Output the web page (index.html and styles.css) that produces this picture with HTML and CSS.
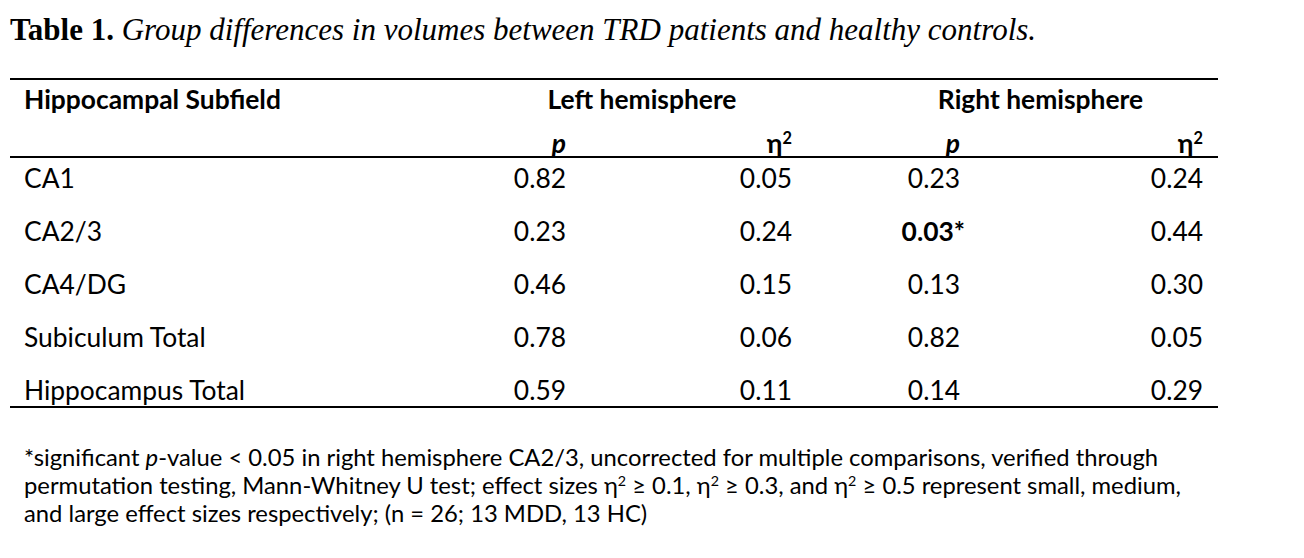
FILE: index.html
```html
<!DOCTYPE html>
<html lang="en">
<head>
<meta charset="utf-8">
<title>Table 1</title>
<link rel="stylesheet" href="styles.css">
</head>
<body>
<div class="page">
  <h1 class="title"><b>Table 1.</b> <i>Group differences in volumes between TRD patients and healthy controls.</i></h1>

  <div class="table">
    <div class="head">
      <div class="cell label bold">Hippocampal Subfield</div>
      <div class="cell span2 bold">Left hemisphere</div>
      <div class="cell span2 right-group bold">Right hemisphere</div>

      <div class="cell label sub"></div>
      <div class="cell num sub bold"><i>p</i></div>
      <div class="cell num sub bold">η<sup>2</sup></div>
      <div class="cell num sub bold"><i>p</i></div>
      <div class="cell num sub bold">η<sup>2</sup></div>
    </div>

    <div class="body">
      <div class="cell label">CA1</div>
      <div class="cell num">0.82</div>
      <div class="cell num">0.05</div>
      <div class="cell num">0.23</div>
      <div class="cell num">0.24</div>

      <div class="cell label">CA2/3</div>
      <div class="cell num">0.23</div>
      <div class="cell num">0.24</div>
      <div class="cell num bold sig">0.03*</div>
      <div class="cell num">0.44</div>

      <div class="cell label">CA4/DG</div>
      <div class="cell num">0.46</div>
      <div class="cell num">0.15</div>
      <div class="cell num">0.13</div>
      <div class="cell num">0.30</div>

      <div class="cell label">Subiculum Total</div>
      <div class="cell num">0.78</div>
      <div class="cell num">0.06</div>
      <div class="cell num">0.82</div>
      <div class="cell num">0.05</div>

      <div class="cell label">Hippocampus Total</div>
      <div class="cell num">0.59</div>
      <div class="cell num">0.11</div>
      <div class="cell num">0.14</div>
      <div class="cell num">0.29</div>
    </div>
  </div>

  <p class="note">*significant <i>p</i>-value &lt; 0.05 in right hemisphere CA2/3, uncorrected for multiple comparisons, verified through<br>permutation testing, Mann-Whitney U test; effect sizes η<sup>2</sup> ≥ 0.1, η<sup>2</sup> ≥ 0.3, and η<sup>2</sup> ≥ 0.5 represent small, medium,<br>and large effect sizes respectively; (n = 26; 13 MDD, 13 HC)</p>
</div>
</body>
</html>
```

FILE: styles.css
```css
html, body {
  margin: 0;
  padding: 0;
  background: #ffffff;
  color: #000000;
}

.page {
  padding: 12px 0 0 10px;
}

.title {
  margin: 0;
  font-family: "Liberation Serif", "Times New Roman", serif;
  font-size: 31px;
  line-height: 36px;
  font-weight: normal;
  white-space: nowrap;
}

.title b {
  font-weight: bold;
}

.table {
  margin-top: 30px;
  width: 1208px;
  font-family: Lato, "Liberation Sans", sans-serif;
  font-size: 26.4px;
  color: #000;
}

.head,
.body {
  display: grid;
  grid-template-columns: 467px 104px 226px 168px 243px;
}

.head {
  border-top: 2px solid #000;
  border-bottom: 2px solid #000;
  padding-top: 4px;
  row-gap: 16px;
  grid-template-rows: 30px 26px;
}

.body {
  border-bottom: 2px solid #000;
  padding-top: 5px;
  padding-bottom: 1px;
  row-gap: 23px;
  grid-auto-rows: 30px;
}

.cell {
  line-height: 30px;
  white-space: nowrap;
}

.head .sub {
  line-height: 26px;
}

.label {
  padding-left: 14px;
}

.num {
  text-align: right;
  padding-right: 15px;
}

.span2 {
  grid-column: span 2;
  text-align: center;
}

.right-group {
  padding-left: 56px;
}

.bold {
  font-weight: bold;
}

.sig {
  margin-right: -5px;
}

sup {
  font-size: 0.62em;
  line-height: 0;
  vertical-align: 0.55em;
}

.note {
  margin: 35px 0 0 14px;
  font-family: Lato, "Liberation Sans", sans-serif;
  font-size: 23.8px;
  line-height: 28px;
  white-space: nowrap;
}

.note sup {
  font-size: 0.6em;
}
```
